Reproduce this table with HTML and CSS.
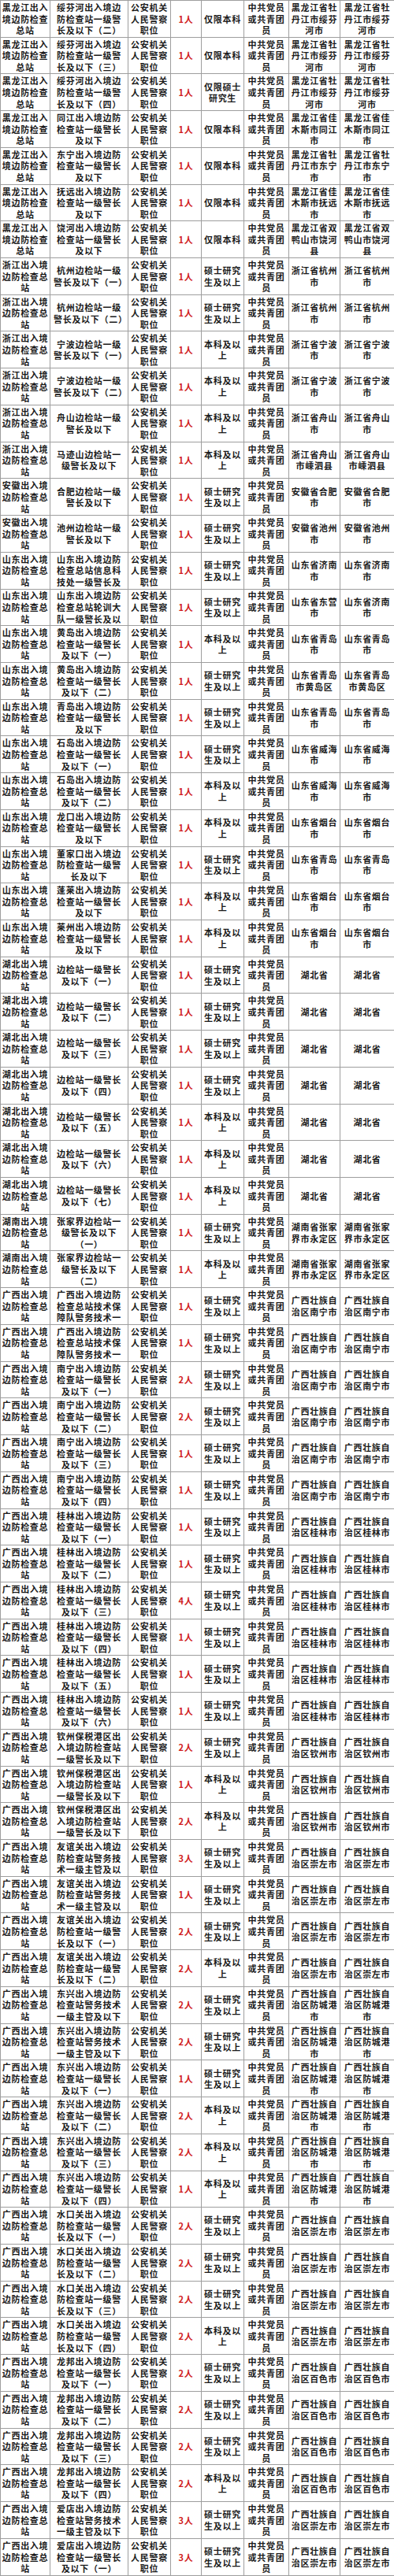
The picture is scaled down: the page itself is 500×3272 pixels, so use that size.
FILE: index.html
```html
<!DOCTYPE html>
<html lang="zh-CN">
<head>
<meta charset="utf-8">
<title>职位表</title>
<link rel="stylesheet" href="styles.css">
</head>
<body>
<table class="sheet">
<colgroup>
<col class="w1"><col class="w2"><col class="w3"><col class="w4"><col class="w5"><col class="w6"><col class="w7"><col class="w8">
</colgroup>
<tbody>
<tr><td>黑龙江出入境边防检查总站</td><td>绥芬河出入境边防检查站一级警长及以下（二）</td><td>公安机关人民警察职位</td><td>1人</td><td>仅限本科</td><td>中共党员或共青团员</td><td>黑龙江省牡丹江市绥芬河市</td><td>黑龙江省牡丹江市绥芬河市</td></tr>
<tr><td>黑龙江出入境边防检查总站</td><td>绥芬河出入境边防检查站一级警长及以下（三）</td><td>公安机关人民警察职位</td><td>1人</td><td>仅限本科</td><td>中共党员或共青团员</td><td>黑龙江省牡丹江市绥芬河市</td><td>黑龙江省牡丹江市绥芬河市</td></tr>
<tr><td>黑龙江出入境边防检查总站</td><td>绥芬河出入境边防检查站一级警长及以下（四）</td><td>公安机关人民警察职位</td><td>1人</td><td>仅限硕士研究生</td><td>中共党员或共青团员</td><td>黑龙江省牡丹江市绥芬河市</td><td>黑龙江省牡丹江市绥芬河市</td></tr>
<tr><td>黑龙江出入境边防检查总站</td><td>同江出入境边防检查站一级警长及以下</td><td>公安机关人民警察职位</td><td>1人</td><td>仅限本科</td><td>中共党员或共青团员</td><td>黑龙江省佳木斯市同江市</td><td>黑龙江省佳木斯市同江市</td></tr>
<tr><td>黑龙江出入境边防检查总站</td><td>东宁出入境边防检查站一级警长及以下</td><td>公安机关人民警察职位</td><td>1人</td><td>仅限本科</td><td>中共党员或共青团员</td><td>黑龙江省牡丹江市东宁市</td><td>黑龙江省牡丹江市东宁市</td></tr>
<tr><td>黑龙江出入境边防检查总站</td><td>抚远出入境边防检查站一级警长及以下</td><td>公安机关人民警察职位</td><td>1人</td><td>仅限本科</td><td>中共党员或共青团员</td><td>黑龙江省佳木斯市抚远市</td><td>黑龙江省佳木斯市抚远市</td></tr>
<tr><td>黑龙江出入境边防检查总站</td><td>饶河出入境边防检查站一级警长及以下</td><td>公安机关人民警察职位</td><td>1人</td><td>仅限本科</td><td>中共党员或共青团员</td><td>黑龙江省双鸭山市饶河县</td><td>黑龙江省双鸭山市饶河县</td></tr>
<tr><td>浙江出入境边防检查总站</td><td>杭州边检站一级警长及以下（一）</td><td>公安机关人民警察职位</td><td>1人</td><td>硕士研究生及以上</td><td>中共党员或共青团员</td><td>浙江省杭州市</td><td>浙江省杭州市</td></tr>
<tr><td>浙江出入境边防检查总站</td><td>杭州边检站一级警长及以下（二）</td><td>公安机关人民警察职位</td><td>1人</td><td>硕士研究生及以上</td><td>中共党员或共青团员</td><td>浙江省杭州市</td><td>浙江省杭州市</td></tr>
<tr><td>浙江出入境边防检查总站</td><td>宁波边检站一级警长及以下（一）</td><td>公安机关人民警察职位</td><td>1人</td><td>本科及以上</td><td>中共党员或共青团员</td><td>浙江省宁波市</td><td>浙江省宁波市</td></tr>
<tr><td>浙江出入境边防检查总站</td><td>宁波边检站一级警长及以下（二）</td><td>公安机关人民警察职位</td><td>1人</td><td>本科及以上</td><td>中共党员或共青团员</td><td>浙江省宁波市</td><td>浙江省宁波市</td></tr>
<tr><td>浙江出入境边防检查总站</td><td>舟山边检站一级警长及以下</td><td>公安机关人民警察职位</td><td>1人</td><td>本科及以上</td><td>中共党员或共青团员</td><td>浙江省舟山市</td><td>浙江省舟山市</td></tr>
<tr><td>浙江出入境边防检查总站</td><td>马迹山边检站一级警长及以下</td><td>公安机关人民警察职位</td><td>1人</td><td>本科及以上</td><td>中共党员或共青团员</td><td>浙江省舟山市嵊泗县</td><td>浙江省舟山市嵊泗县</td></tr>
<tr><td>安徽出入境边防检查总站</td><td>合肥边检站一级警长及以下</td><td>公安机关人民警察职位</td><td>1人</td><td>硕士研究生及以上</td><td>中共党员或共青团员</td><td>安徽省合肥市</td><td>安徽省合肥市</td></tr>
<tr><td>安徽出入境边防检查总站</td><td>池州边检站一级警长及以下</td><td>公安机关人民警察职位</td><td>1人</td><td>硕士研究生及以上</td><td>中共党员或共青团员</td><td>安徽省池州市</td><td>安徽省池州市</td></tr>
<tr><td>山东出入境边防检查总站</td><td><div class="clip">山东出入境边防检查总站信息科技处一级警长及以下</div></td><td>公安机关人民警察职位</td><td>1人</td><td>硕士研究生及以上</td><td>中共党员或共青团员</td><td>山东省济南市</td><td>山东省济南市</td></tr>
<tr><td>山东出入境边防检查总站</td><td><div class="clip">山东出入境边防检查总站轮训大队一级警长及以下</div></td><td>公安机关人民警察职位</td><td>1人</td><td>硕士研究生及以上</td><td>中共党员或共青团员</td><td>山东省东营市</td><td>山东省济南市</td></tr>
<tr><td>山东出入境边防检查总站</td><td>黄岛出入境边防检查站一级警长及以下（一）</td><td>公安机关人民警察职位</td><td>1人</td><td>本科及以上</td><td>中共党员或共青团员</td><td>山东省青岛市</td><td>山东省青岛市</td></tr>
<tr><td>山东出入境边防检查总站</td><td>黄岛出入境边防检查站一级警长及以下（二）</td><td>公安机关人民警察职位</td><td>1人</td><td>硕士研究生及以上</td><td>中共党员或共青团员</td><td>山东省青岛市黄岛区</td><td>山东省青岛市黄岛区</td></tr>
<tr><td>山东出入境边防检查总站</td><td>青岛出入境边防检查站一级警长及以下</td><td>公安机关人民警察职位</td><td>1人</td><td>硕士研究生及以上</td><td>中共党员或共青团员</td><td>山东省青岛市</td><td>山东省青岛市</td></tr>
<tr><td>山东出入境边防检查总站</td><td>石岛出入境边防检查站一级警长及以下（一）</td><td>公安机关人民警察职位</td><td>1人</td><td>硕士研究生及以上</td><td>中共党员或共青团员</td><td>山东省威海市</td><td>山东省威海市</td></tr>
<tr><td>山东出入境边防检查总站</td><td>石岛出入境边防检查站一级警长及以下（二）</td><td>公安机关人民警察职位</td><td>1人</td><td>本科及以上</td><td>中共党员或共青团员</td><td>山东省威海市</td><td>山东省威海市</td></tr>
<tr><td>山东出入境边防检查总站</td><td>龙口出入境边防检查站一级警长及以下</td><td>公安机关人民警察职位</td><td>1人</td><td>本科及以上</td><td>中共党员或共青团员</td><td>山东省烟台市</td><td>山东省烟台市</td></tr>
<tr><td>山东出入境边防检查总站</td><td>董家口出入境边防检查站一级警长及以下</td><td>公安机关人民警察职位</td><td>1人</td><td>硕士研究生及以上</td><td>中共党员或共青团员</td><td>山东省青岛市</td><td>山东省青岛市</td></tr>
<tr><td>山东出入境边防检查总站</td><td>蓬莱出入境边防检查站一级警长及以下</td><td>公安机关人民警察职位</td><td>1人</td><td>本科及以上</td><td>中共党员或共青团员</td><td>山东省烟台市</td><td>山东省烟台市</td></tr>
<tr><td>山东出入境边防检查总站</td><td>莱州出入境边防检查站一级警长及以下</td><td>公安机关人民警察职位</td><td>1人</td><td>本科及以上</td><td>中共党员或共青团员</td><td>山东省烟台市</td><td>山东省烟台市</td></tr>
<tr><td>湖北出入境边防检查总站</td><td>边检站一级警长及以下（一）</td><td>公安机关人民警察职位</td><td>1人</td><td>硕士研究生及以上</td><td>中共党员或共青团员</td><td>湖北省</td><td>湖北省</td></tr>
<tr><td>湖北出入境边防检查总站</td><td>边检站一级警长及以下（二）</td><td>公安机关人民警察职位</td><td>1人</td><td>硕士研究生及以上</td><td>中共党员或共青团员</td><td>湖北省</td><td>湖北省</td></tr>
<tr><td>湖北出入境边防检查总站</td><td>边检站一级警长及以下（三）</td><td>公安机关人民警察职位</td><td>1人</td><td>硕士研究生及以上</td><td>中共党员或共青团员</td><td>湖北省</td><td>湖北省</td></tr>
<tr><td>湖北出入境边防检查总站</td><td>边检站一级警长及以下（四）</td><td>公安机关人民警察职位</td><td>1人</td><td>硕士研究生及以上</td><td>中共党员或共青团员</td><td>湖北省</td><td>湖北省</td></tr>
<tr><td>湖北出入境边防检查总站</td><td>边检站一级警长及以下（五）</td><td>公安机关人民警察职位</td><td>1人</td><td>本科及以上</td><td>中共党员或共青团员</td><td>湖北省</td><td>湖北省</td></tr>
<tr><td>湖北出入境边防检查总站</td><td>边检站一级警长及以下（六）</td><td>公安机关人民警察职位</td><td>1人</td><td>本科及以上</td><td>中共党员或共青团员</td><td>湖北省</td><td>湖北省</td></tr>
<tr><td>湖北出入境边防检查总站</td><td>边检站一级警长及以下（七）</td><td>公安机关人民警察职位</td><td>1人</td><td>本科及以上</td><td>中共党员或共青团员</td><td>湖北省</td><td>湖北省</td></tr>
<tr><td>湖南出入境边防检查总站</td><td>张家界边检站一级警长及以下（一）</td><td>公安机关人民警察职位</td><td>1人</td><td>硕士研究生及以上</td><td>中共党员或共青团员</td><td>湖南省张家界市永定区</td><td>湖南省张家界市永定区</td></tr>
<tr><td>湖南出入境边防检查总站</td><td>张家界边检站一级警长及以下（二）</td><td>公安机关人民警察职位</td><td>1人</td><td>本科及以上</td><td>中共党员或共青团员</td><td>湖南省张家界市永定区</td><td>湖南省张家界市永定区</td></tr>
<tr><td>广西出入境边防检查总站</td><td><div class="clip">广西出入境边防检查总站技术保障队警务技术一级主管及以下</div></td><td>公安机关人民警察职位</td><td>1人</td><td>硕士研究生及以上</td><td>中共党员或共青团员</td><td>广西壮族自治区南宁市</td><td>广西壮族自治区南宁市</td></tr>
<tr><td>广西出入境边防检查总站</td><td><div class="clip">广西出入境边防检查总站技术保障队警务技术一级主管及以下</div></td><td>公安机关人民警察职位</td><td>1人</td><td>硕士研究生及以上</td><td>中共党员或共青团员</td><td>广西壮族自治区南宁市</td><td>广西壮族自治区南宁市</td></tr>
<tr><td>广西出入境边防检查总站</td><td>南宁出入境边防检查站一级警长及以下（一）</td><td>公安机关人民警察职位</td><td>2人</td><td>硕士研究生及以上</td><td>中共党员或共青团员</td><td>广西壮族自治区南宁市</td><td>广西壮族自治区南宁市</td></tr>
<tr><td>广西出入境边防检查总站</td><td>南宁出入境边防检查站一级警长及以下（二）</td><td>公安机关人民警察职位</td><td>2人</td><td>硕士研究生及以上</td><td>中共党员或共青团员</td><td>广西壮族自治区南宁市</td><td>广西壮族自治区南宁市</td></tr>
<tr><td>广西出入境边防检查总站</td><td>南宁出入境边防检查站一级警长及以下（三）</td><td>公安机关人民警察职位</td><td>1人</td><td>硕士研究生及以上</td><td>中共党员或共青团员</td><td>广西壮族自治区南宁市</td><td>广西壮族自治区南宁市</td></tr>
<tr><td>广西出入境边防检查总站</td><td>南宁出入境边防检查站一级警长及以下（四）</td><td>公安机关人民警察职位</td><td>1人</td><td>硕士研究生及以上</td><td>中共党员或共青团员</td><td>广西壮族自治区南宁市</td><td>广西壮族自治区南宁市</td></tr>
<tr><td>广西出入境边防检查总站</td><td>桂林出入境边防检查站一级警长及以下（一）</td><td>公安机关人民警察职位</td><td>1人</td><td>硕士研究生及以上</td><td>中共党员或共青团员</td><td>广西壮族自治区桂林市</td><td>广西壮族自治区桂林市</td></tr>
<tr><td>广西出入境边防检查总站</td><td>桂林出入境边防检查站一级警长及以下（二）</td><td>公安机关人民警察职位</td><td>1人</td><td>硕士研究生及以上</td><td>中共党员或共青团员</td><td>广西壮族自治区桂林市</td><td>广西壮族自治区桂林市</td></tr>
<tr><td>广西出入境边防检查总站</td><td>桂林出入境边防检查站一级警长及以下（三）</td><td>公安机关人民警察职位</td><td>4人</td><td>硕士研究生及以上</td><td>中共党员或共青团员</td><td>广西壮族自治区桂林市</td><td>广西壮族自治区桂林市</td></tr>
<tr><td>广西出入境边防检查总站</td><td>桂林出入境边防检查站一级警长及以下（四）</td><td>公安机关人民警察职位</td><td>1人</td><td>硕士研究生及以上</td><td>中共党员或共青团员</td><td>广西壮族自治区桂林市</td><td>广西壮族自治区桂林市</td></tr>
<tr><td>广西出入境边防检查总站</td><td>桂林出入境边防检查站一级警长及以下（五）</td><td>公安机关人民警察职位</td><td>1人</td><td>硕士研究生及以上</td><td>中共党员或共青团员</td><td>广西壮族自治区桂林市</td><td>广西壮族自治区桂林市</td></tr>
<tr><td>广西出入境边防检查总站</td><td>桂林出入境边防检查站一级警长及以下（六）</td><td>公安机关人民警察职位</td><td>1人</td><td>硕士研究生及以上</td><td>中共党员或共青团员</td><td>广西壮族自治区桂林市</td><td>广西壮族自治区桂林市</td></tr>
<tr><td>广西出入境边防检查总站</td><td>钦州保税港区出入境边防检查站一级警长及以下</td><td>公安机关人民警察职位</td><td>2人</td><td>硕士研究生及以上</td><td>中共党员或共青团员</td><td>广西壮族自治区钦州市</td><td>广西壮族自治区钦州市</td></tr>
<tr><td>广西出入境边防检查总站</td><td>钦州保税港区出入境边防检查站一级警长及以下</td><td>公安机关人民警察职位</td><td>1人</td><td>本科及以上</td><td>中共党员或共青团员</td><td>广西壮族自治区钦州市</td><td>广西壮族自治区钦州市</td></tr>
<tr><td>广西出入境边防检查总站</td><td>钦州保税港区出入境边防检查站一级警长及以下</td><td>公安机关人民警察职位</td><td>2人</td><td>本科及以上</td><td>中共党员或共青团员</td><td>广西壮族自治区钦州市</td><td>广西壮族自治区钦州市</td></tr>
<tr><td>广西出入境边防检查总站</td><td><div class="clip">友谊关出入境边防检查站警务技术一级主管及以下</div></td><td>公安机关人民警察职位</td><td>3人</td><td>硕士研究生及以上</td><td>中共党员或共青团员</td><td>广西壮族自治区崇左市</td><td>广西壮族自治区崇左市</td></tr>
<tr><td>广西出入境边防检查总站</td><td><div class="clip">友谊关出入境边防检查站警务技术一级主管及以下</div></td><td>公安机关人民警察职位</td><td>1人</td><td>硕士研究生及以上</td><td>中共党员或共青团员</td><td>广西壮族自治区崇左市</td><td>广西壮族自治区崇左市</td></tr>
<tr><td>广西出入境边防检查总站</td><td>友谊关出入境边防检查站一级警长及以下（一）</td><td>公安机关人民警察职位</td><td>2人</td><td>硕士研究生及以上</td><td>中共党员或共青团员</td><td>广西壮族自治区崇左市</td><td>广西壮族自治区崇左市</td></tr>
<tr><td>广西出入境边防检查总站</td><td>友谊关出入境边防检查站一级警长及以下（二）</td><td>公安机关人民警察职位</td><td>2人</td><td>本科及以上</td><td>中共党员或共青团员</td><td>广西壮族自治区崇左市</td><td>广西壮族自治区崇左市</td></tr>
<tr><td>广西出入境边防检查总站</td><td>东兴出入境边防检查站警务技术一级主管及以下</td><td>公安机关人民警察职位</td><td>2人</td><td>硕士研究生及以上</td><td>中共党员或共青团员</td><td>广西壮族自治区防城港市</td><td>广西壮族自治区防城港市</td></tr>
<tr><td>广西出入境边防检查总站</td><td>东兴出入境边防检查站警务技术一级主管及以下</td><td>公安机关人民警察职位</td><td>2人</td><td>硕士研究生及以上</td><td>中共党员或共青团员</td><td>广西壮族自治区防城港市</td><td>广西壮族自治区防城港市</td></tr>
<tr><td>广西出入境边防检查总站</td><td>东兴出入境边防检查站一级警长及以下（一）</td><td>公安机关人民警察职位</td><td>1人</td><td>硕士研究生及以上</td><td>中共党员或共青团员</td><td>广西壮族自治区防城港市</td><td>广西壮族自治区防城港市</td></tr>
<tr><td>广西出入境边防检查总站</td><td>东兴出入境边防检查站一级警长及以下（二）</td><td>公安机关人民警察职位</td><td>2人</td><td>本科及以上</td><td>中共党员或共青团员</td><td>广西壮族自治区防城港市</td><td>广西壮族自治区防城港市</td></tr>
<tr><td>广西出入境边防检查总站</td><td>东兴出入境边防检查站一级警长及以下（三）</td><td>公安机关人民警察职位</td><td>2人</td><td>本科及以上</td><td>中共党员或共青团员</td><td>广西壮族自治区防城港市</td><td>广西壮族自治区防城港市</td></tr>
<tr><td>广西出入境边防检查总站</td><td>东兴出入境边防检查站一级警长及以下（四）</td><td>公安机关人民警察职位</td><td>1人</td><td>本科及以上</td><td>中共党员或共青团员</td><td>广西壮族自治区防城港市</td><td>广西壮族自治区防城港市</td></tr>
<tr><td>广西出入境边防检查总站</td><td>水口关出入境边防检查站一级警长及以下（一）</td><td>公安机关人民警察职位</td><td>2人</td><td>硕士研究生及以上</td><td>中共党员或共青团员</td><td>广西壮族自治区崇左市</td><td>广西壮族自治区崇左市</td></tr>
<tr><td>广西出入境边防检查总站</td><td>水口关出入境边防检查站一级警长及以下（二）</td><td>公安机关人民警察职位</td><td>2人</td><td>硕士研究生及以上</td><td>中共党员或共青团员</td><td>广西壮族自治区崇左市</td><td>广西壮族自治区崇左市</td></tr>
<tr><td>广西出入境边防检查总站</td><td>水口关出入境边防检查站一级警长及以下（三）</td><td>公安机关人民警察职位</td><td>2人</td><td>硕士研究生及以上</td><td>中共党员或共青团员</td><td>广西壮族自治区崇左市</td><td>广西壮族自治区崇左市</td></tr>
<tr><td>广西出入境边防检查总站</td><td>水口关出入境边防检查站一级警长及以下（四）</td><td>公安机关人民警察职位</td><td>2人</td><td>本科及以上</td><td>中共党员或共青团员</td><td>广西壮族自治区崇左市</td><td>广西壮族自治区崇左市</td></tr>
<tr><td>广西出入境边防检查总站</td><td>龙邦出入境边防检查站一级警长及以下（一）</td><td>公安机关人民警察职位</td><td>2人</td><td>硕士研究生及以上</td><td>中共党员或共青团员</td><td>广西壮族自治区百色市</td><td>广西壮族自治区百色市</td></tr>
<tr><td>广西出入境边防检查总站</td><td>龙邦出入境边防检查站一级警长及以下（二）</td><td>公安机关人民警察职位</td><td>2人</td><td>硕士研究生及以上</td><td>中共党员或共青团员</td><td>广西壮族自治区百色市</td><td>广西壮族自治区百色市</td></tr>
<tr><td>广西出入境边防检查总站</td><td>龙邦出入境边防检查站一级警长及以下（三）</td><td>公安机关人民警察职位</td><td>2人</td><td>硕士研究生及以上</td><td>中共党员或共青团员</td><td>广西壮族自治区百色市</td><td>广西壮族自治区百色市</td></tr>
<tr><td>广西出入境边防检查总站</td><td>龙邦出入境边防检查站一级警长及以下（四）</td><td>公安机关人民警察职位</td><td>2人</td><td>本科及以上</td><td>中共党员或共青团员</td><td>广西壮族自治区百色市</td><td>广西壮族自治区百色市</td></tr>
<tr><td>广西出入境边防检查总站</td><td>爱店出入境边防检查站警务技术一级主管及以下</td><td>公安机关人民警察职位</td><td>3人</td><td>硕士研究生及以上</td><td>中共党员或共青团员</td><td>广西壮族自治区崇左市</td><td>广西壮族自治区崇左市</td></tr>
<tr><td>广西出入境边防检查总站</td><td>爱店出入境边防检查站一级警长及以下（一）</td><td>公安机关人民警察职位</td><td>3人</td><td>硕士研究生及以上</td><td>中共党员或共青团员</td><td>广西壮族自治区崇左市</td><td>广西壮族自治区崇左市</td></tr>
</tbody>
</table>
</body>
</html>
```

FILE: styles.css
```css
html, body {
  margin: 0;
  padding: 0;
  background: #ffffff;
}

.sheet {
  width: 500px;
  height: 3272px;
  border-collapse: collapse;
  table-layout: fixed;
  font-family: "Noto Sans CJK SC", "Noto Sans CJK JP", sans-serif;
  font-weight: 700;
  font-size: 11px;
  letter-spacing: 0.7px;
  line-height: 14.6px;
  color: #1a1a1a;
}

.sheet .w1 { width: 63px; }
.sheet .w2 { width: 99px; }
.sheet .w3 { width: 54px; }
.sheet .w4 { width: 39px; }
.sheet .w5 { width: 54px; }
.sheet .w6 { width: 57px; }
.sheet .w7 { width: 65px; }
.sheet .w8 { width: 69px; }

.sheet td {
  border: 1px solid #9e9e9e;
  padding: 0 1px;
  text-align: center;
  vertical-align: middle;
  overflow: hidden;
}

.sheet td:nth-child(2) {
  padding: 0 4px;
}

.sheet td:nth-child(4) {
  color: #d01c1c;
}

.sheet .clip {
  max-height: 43.8px;
  overflow: hidden;
}
```
